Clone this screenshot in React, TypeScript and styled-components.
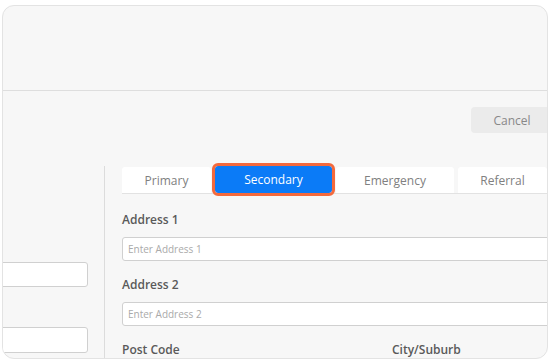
import React from 'react'
import styled, { createGlobalStyle } from 'styled-components'

const tabs = [
  { label: 'Primary', width: 89 },
  { label: 'Secondary', width: 117, active: true },
  { label: 'Emergency', width: 118 },
  { label: 'Referral', width: 89 }
]

export default () => (
  <>
    <Global />
    <Frame>
      <Header />
      <Page>
        <Toolbar>
          <GhostButton>Cancel</GhostButton>
        </Toolbar>
        <Body>
          <LeftCol>
            <Input $h={25} />
            <Input $h={26} />
          </LeftCol>
          <RightCol>
            <Tabs>
              {tabs.map(t => (
                <Tab key={t.label} $active={t.active} style={{ width: t.width }}>
                  {t.label}
                </Tab>
              ))}
            </Tabs>
            <Field>
              <Label>Address 1</Label>
              <Input placeholder="Enter Address 1" />
            </Field>
            <Field>
              <Label>Address 2</Label>
              <Input placeholder="Enter Address 2" />
            </Field>
            <TwoCols>
              <Label>Post Code</Label>
              <Label>City/Suburb</Label>
            </TwoCols>
          </RightCol>
        </Body>
      </Page>
    </Frame>
  </>
)

const Global = createGlobalStyle`
  body {
    margin: 0;
    background: #fff;
    font-family: 'Open Sans', 'Liberation Sans', sans-serif;
  }
`

const Frame = styled.div`
  margin: 5px 2px;
  width: 546px;
  height: 354px;
  box-sizing: border-box;
  border: 1px solid #e3e3e3;
  border-radius: 12px;
  background: #f7f7f7;
  overflow: hidden;
`

const Header = styled.div`
  height: 84px;
  border-bottom: 1px solid #dedede;
`

const Page = styled.div`
  margin-left: -30px;
  width: 689px;
`

const Toolbar = styled.div`
  display: flex;
  justify-content: flex-end;
  padding: 16px 109px 33px 0;
`

const GhostButton = styled.button`
  width: 82px;
  height: 26px;
  border: none;
  border-radius: 4px;
  background: #ebebeb;
  color: #888;
  font-family: inherit;
  font-size: 12px;
  padding: 0;
`

const Body = styled.div`
  display: grid;
  grid-template-columns: 131px 1fr;
`

const LeftCol = styled.div`
  display: flex;
  flex-direction: column;
  gap: 40px;
  padding: 96px 16px 0 0;
`

const RightCol = styled.div`
  border-left: 1px solid #dcdcdc;
  padding: 0 16px 0 17px;
`

const Tabs = styled.div`
  display: flex;
  gap: 4px;
  border-bottom: 1px solid #e2e2e2;
  margin-bottom: 18px;
`

const Tab = styled.div<{ $active?: boolean }>`
  flex: none;
  margin-top: ${p => (p.$active ? '0' : '1px')};
  height: ${p => (p.$active ? '27px' : '26px')};
  display: flex;
  align-items: center;
  justify-content: center;
  font-size: 12px;
  border-radius: 3px 3px 0 0;
  background: ${p => (p.$active ? '#0b7bf7' : '#fff')};
  color: ${p => (p.$active ? '#fff' : '#808080')};
  ${p =>
    p.$active &&
    `
    border-radius: 3px;
    outline: 3px solid #f4693c;
    outline-offset: 0;
    box-shadow: 0 0 0 1px #fff;
  `}
`

const Field = styled.div`
  display: flex;
  flex-direction: column;
  margin-bottom: 16px;
`

const Label = styled.label`
  font-size: 12px;
  line-height: 16px;
  font-weight: 600;
  color: #5a5a5a;
  margin-bottom: 9px;
`

const Input = styled.input<{ $h?: number }>`
  box-sizing: border-box;
  width: 100%;
  height: ${p => p.$h || 24}px;
  border: 1px solid #d0d0d0;
  border-radius: 3px;
  background: #fff;
  padding: 0 5px;
  font-family: inherit;
  font-size: 10px;
  color: #444;
  outline: none;

  &::placeholder {
    color: #aaa;
  }
`

const TwoCols = styled.div`
  display: grid;
  grid-template-columns: 1fr 1fr;
  gap: 16px;
`
